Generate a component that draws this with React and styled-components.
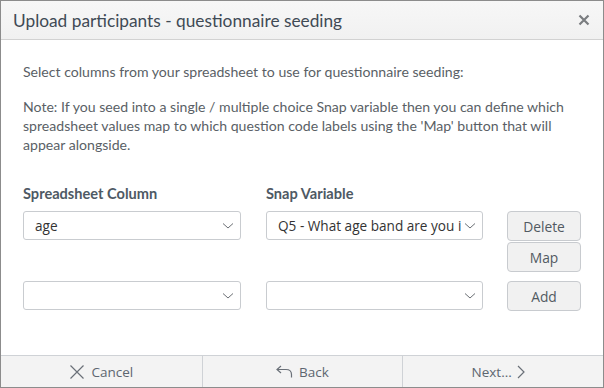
import React from "react";
import styled, { createGlobalStyle } from "styled-components";

const Global = createGlobalStyle`
  html, body { margin: 0; padding: 0; background: #fff; }
  * { box-sizing: border-box; }
`;

const Dialog = styled.div`
  width: 604px;
  height: 388px;
  border: 1px solid #8c8c8c;
  display: flex;
  flex-direction: column;
  background: #fff;
  font-family: "Lato", "Open Sans", sans-serif;
`;

const Header = styled.div`
  height: 39px;
  flex: none;
  display: flex;
  align-items: center;
  justify-content: space-between;
  padding: 0 13px 0 12px;
  background: linear-gradient(#f7f7f7, #f1f1f1);
  border-bottom: 1px solid #d2d2d2;
`;

const Title = styled.h1`
  margin: 0;
  font-family: "Lato", sans-serif;
  font-weight: 400;
  font-size: 17.3px;
  color: #3f4a55;
`;

const Close = styled.button`
  border: 0;
  background: none;
  padding: 0;
  width: 12px;
  height: 12px;
  display: flex;
  cursor: pointer;
`;

const Body = styled.div`
  flex: 1;
  padding: 22px 22px 0 22px;
  color: #5a5f66;
  font-family: "Lato", sans-serif;
  font-size: 14.1px;
  line-height: 19px;
`;

const Para = styled.p`
  margin: 0 0 ${(p) => p.$gap || 0}px 0;
`;

const Grid = styled.div`
  display: grid;
  grid-template-columns: 218px 218px 74px;
  column-gap: 24px;
  margin-top: 30px;
`;

const Label = styled.div`
  font-weight: 700;
  color: #4e5964;
  font-size: 14.6px;
  line-height: 19px;
  margin-bottom: 8px;
  margin-left: ${(p) => p.$shift || 0}px;
`;

const SelectBox = styled.div`
  height: 29px;
  border: 1px solid #c9ccd0;
  border-radius: 3px;
  display: flex;
  align-items: center;
  padding: 0 6px 0 11px;
  color: #333;
  font-family: "Open Sans", sans-serif;
  font-size: 13.6px;
  background: #fff;
  margin-left: ${(p) => p.$shift || 0}px;
  overflow: hidden;
`;

const SelectText = styled.span`
  flex: 1;
  white-space: nowrap;
  overflow: hidden;
  margin-right: 3px;
`;

const ButtonCol = styled.div`
  display: flex;
  flex-direction: column;
  gap: 1px;
  margin-bottom: 9px;
`;

const Button = styled.button`
  width: 74px;
  height: 30px;
  border: 1px solid #c8cbcf;
  border-radius: 4px;
  background: #f1f1f1;
  color: #525a62;
  font-family: "Open Sans", sans-serif;
  font-size: 13.8px;
  padding: 0;
  cursor: pointer;
`;

const Footer = styled.div`
  height: 32px;
  flex: none;
  display: grid;
  grid-template-columns: repeat(3, 1fr);
  border-top: 1px solid #cfd2d6;
  background: #f3f3f3;
`;

const FooterBtn = styled.button`
  border: 0;
  border-left: ${(p) => (p.$first ? "0" : "1px solid #cfd2d6")};
  background: transparent;
  display: flex;
  align-items: center;
  justify-content: center;
  gap: 6px;
  color: #5d6670;
  font-family: "Open Sans", sans-serif;
  font-size: 13.5px;
  padding: 0 ${(p) => p.$padRight || 0}px 0 0;
  cursor: pointer;
`;

const Chevron = () => (
  <svg width="12" height="8" viewBox="0 0 12 8" style={{ flex: "none" }}>
    <path d="M1 1.5 L6 6 L11 1.5" fill="none" stroke="#6b6f74" strokeWidth="1" />
  </svg>
);

const Select = ({ value, shift }) => (
  <SelectBox $shift={shift}>
    <SelectText>{value}</SelectText>
    <Chevron />
  </SelectBox>
);

export default function App() {
  return (
    <>
      <Global />
      <Dialog>
        <Header>
          <Title>Upload participants - questionnaire seeding</Title>
          <Close aria-label="Close">
            <svg width="12" height="12" viewBox="0 0 12 12">
              <path d="M1.5 1.5 L10.5 10.5 M10.5 1.5 L1.5 10.5" stroke="#7a7d80" strokeWidth="2.2" />
            </svg>
          </Close>
        </Header>
        <Body>
          <Para $gap={16}>Select columns from your spreadsheet to use for questionnaire seeding:</Para>
          <Para>
            Note: If you seed into a single / multiple choice Snap variable then you can define which
            spreadsheet values map to which question code labels using the 'Map' button that will
            appear alongside.
          </Para>
          <Grid>
            <Label>Spreadsheet Column</Label>
            <Label $shift={1}>Snap Variable</Label>
            <div />
            <Select value="age" />
            <Select value="Q5 - What age band are you in?" shift={1} />
            <ButtonCol>
              <Button>Delete</Button>
              <Button>Map</Button>
            </ButtonCol>
            <Select value="" />
            <Select value="" shift={1} />
            <ButtonCol>
              <Button>Add</Button>
            </ButtonCol>
          </Grid>
        </Body>
        <Footer>
          <FooterBtn $first>
            <svg width="16" height="16" viewBox="0 0 16 16">
              <path d="M1.5 1.5 L14.5 14.5 M14.5 1.5 L1.5 14.5" stroke="#6a7078" strokeWidth="1.2" fill="none" />
            </svg>
            Cancel
          </FooterBtn>
          <FooterBtn>
            <svg width="17" height="13" viewBox="0 0 17 13">
              <path d="M5 1 L1 4.5 L5 8 M1 4.5 H10 Q15.5 4.5 15.5 9.5 V12.5" stroke="#6a7078" strokeWidth="1.2" fill="none" />
            </svg>
            Back
          </FooterBtn>
          <FooterBtn $padRight={10}>
            Next...
            <svg width="8" height="14" viewBox="0 0 8 14" style={{ marginLeft: -1 }}>
              <path d="M1 1 L7 7 L1 13" stroke="#6a7078" strokeWidth="1.2" fill="none" />
            </svg>
          </FooterBtn>
        </Footer>
      </Dialog>
    </>
  );
}
